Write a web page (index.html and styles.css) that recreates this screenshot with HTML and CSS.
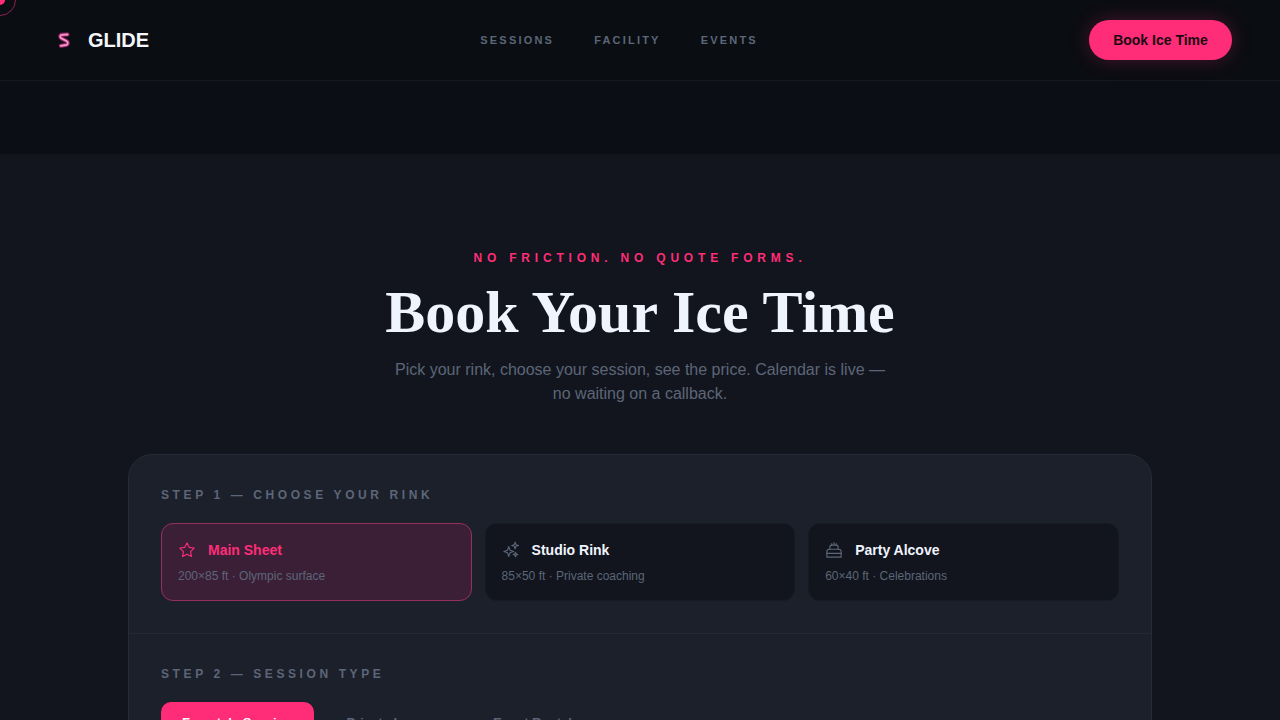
FILE: index.html
```html
<!DOCTYPE html>
<html lang="en">
<head>
    <meta charset="UTF-8">
    <meta name="viewport" content="width=device-width, initial-scale=1.0">
    <title>Glide - Book Your Ice Time</title>
    <link rel="stylesheet" href="styles.css">
</head>
<body>
    <div class="cursor-ring"><div class="cursor-dot"></div></div>

    <nav class="navbar">
        <a class="logo" href="#">
            <span class="logo-icon">
                <svg width="16" height="18" viewBox="0 0 16 18" fill="none" stroke-linecap="round" stroke-linejoin="round">
                    <path d="M11.500 3.500 6 3.800C3.800 4 3.600 6.400 5.500 7.400L10.500 10C12.400 11 12.200 13.600 10 14L4.800 14.800" stroke="#a02368" stroke-width="4"/>
                    <path d="M11.500 3.500 6 3.800C3.800 4 3.600 6.400 5.500 7.400L10.500 10C12.400 11 12.200 13.600 10 14L4.800 14.800" stroke="#f39ac6" stroke-width="1.800"/>
                </svg>
            </span>
            <span>GLIDE</span>
        </a>
        <div class="nav-links">
            <a href="#">SESSIONS</a>
            <a href="#">FACILITY</a>
            <a href="#">EVENTS</a>
        </div>
        <button class="nav-cta">Book Ice Time</button>
    </nav>

    <div class="nav-band"></div>

    <section class="booking">
        <p class="eyebrow">NO FRICTION. NO QUOTE FORMS.</p>
        <h1>Book Your Ice Time</h1>
        <p class="lead">Pick your rink, choose your session, see the price. Calendar is live — no waiting on a callback.</p>

        <div class="panel">
            <div class="step">
                <div class="step-label">STEP 1 — CHOOSE YOUR RINK</div>
                <div class="rink-grid">
                    <div class="rink-card active">
                        <div class="rink-title">
                            <svg class="rink-icon" viewBox="0 0 24 24" fill="none" stroke="currentColor" stroke-width="1.500" stroke-linecap="round" stroke-linejoin="round">
                                <path d="M12 2.500l2.940 5.960 6.580.96-4.760 4.640 1.120 6.550L12 17.520l-5.880 3.090 1.120-6.550-4.760-4.640 6.580-.96z"/>
                            </svg>
                            <span>Main Sheet</span>
                        </div>
                        <div class="rink-meta">200×85 ft · Olympic surface</div>
                    </div>
                    <div class="rink-card">
                        <div class="rink-title">
                            <svg class="rink-icon" viewBox="0 0 24 24" fill="none" stroke="currentColor" stroke-width="1.500" stroke-linecap="round" stroke-linejoin="round">
                                <path d="M9 7.500l1.700 4.800 4.800 1.700-4.800 1.700L9 20.500l-1.700-4.800L2.500 14l4.800-1.700z"/>
                                <path d="M17.500 1.500l1.100 3.400 3.400 1.100-3.400 1.100-1.100 3.400-1.100-3.400L13 6l3.400-1.100z"/>
                                <path d="M18 15l.8 2.200 2.200.8-2.200.8L18 21l-.8-2.200-2.200-.8 2.200-.8z"/>
                            </svg>
                            <span>Studio Rink</span>
                        </div>
                        <div class="rink-meta">85×50 ft · Private coaching</div>
                    </div>
                    <div class="rink-card">
                        <div class="rink-title">
                            <svg class="rink-icon" viewBox="0 0 24 24" fill="none" stroke="currentColor" stroke-width="1.500" stroke-linecap="round" stroke-linejoin="round">
                                <path d="M12 2v3M9 3.500v2M15 3.500v2"/>
                                <path d="M6.500 11V8.500C6.500 6.500 7.500 5.500 9 5.500h6c1.500 0 2.500 1 2.500 3V11"/>
                                <path d="M2.500 14c0-2 1.200-3 3-3h13c1.800 0 3 1 3 3v7.500h-19z"/>
                                <path d="M2.500 16.500h19"/>
                            </svg>
                            <span>Party Alcove</span>
                        </div>
                        <div class="rink-meta">60×40 ft · Celebrations</div>
                    </div>
                </div>
            </div>
            <div class="step">
                <div class="step-label">STEP 2 — SESSION TYPE</div>
                <div class="session-tabs">
                    <button class="session-tab active">Freestyle Session</button>
                    <button class="session-tab">Private Lesson</button>
                    <button class="session-tab">Event Rental</button>
                </div>
            </div>
        </div>
    </section>
</body>
</html>
```

FILE: styles.css
```css
* {
    box-sizing: border-box;
}

body {
    margin: 0;
    background-color: #0b0e14;
    color: #f0f4ff;
    font-family: "Liberation Sans", Arial, sans-serif;
    height: 720px;
    overflow: hidden;
}

.cursor-ring {
    position: absolute;
    left: -16px;
    top: -16px;
    width: 32px;
    height: 32px;
    border: 1px solid #8c2250;
    border-radius: 50%;
    display: flex;
    align-items: center;
    justify-content: center;
}

.cursor-dot {
    width: 10px;
    height: 10px;
    background-color: #ff2d78;
    border-radius: 50%;
}

.navbar {
    height: 81px;
    padding: 0 48px;
    display: flex;
    align-items: center;
    justify-content: space-between;
    background-color: #0a0d12;
    border-bottom: 1px solid #141821;
}

.logo {
    display: flex;
    align-items: center;
    gap: 8px;
    color: #f4f6fb;
    text-decoration: none;
    font-size: 20px;
    font-weight: 700;
}

.logo-icon {
    width: 32px;
    height: 32px;
    display: flex;
    align-items: center;
    justify-content: center;
}

.nav-links {
    display: flex;
    gap: 40px;
}

.nav-links a {
    color: #5c6678;
    text-decoration: none;
    font-size: 11px;
    font-weight: 700;
    letter-spacing: 2.2px;
}

.nav-cta {
    width: 143px;
    height: 40px;
    background-color: #ff2d78;
    color: #1a0a12;
    border: none;
    border-radius: 20px;
    font-family: inherit;
    font-size: 14px;
    font-weight: 700;
    box-shadow: 0 0 20px rgba(255, 45, 120, 0.25);
}

.nav-band {
    height: 73px;
    background-color: #0b0e15;
}

.booking {
    background-color: #12151d;
    padding-top: 97px;
    height: 566px;
}

.eyebrow {
    margin: 0;
    text-align: center;
    color: #ff2d78;
    font-size: 12px;
    line-height: 15px;
    font-weight: 700;
    letter-spacing: 4.8px;
}

h1 {
    margin: 12px 0 0;
    text-align: center;
    font-family: "Liberation Serif", "Times New Roman", serif;
    font-size: 60px;
    line-height: 68px;
    font-weight: 700;
    color: #f0f4ff;
}

.lead {
    width: 500px;
    margin: 12px auto 0;
    text-align: center;
    color: #5c6678;
    font-size: 16px;
    line-height: 24px;
}

.panel {
    width: 1024px;
    margin: 48px auto 0;
    background-color: #1c202b;
    border: 1px solid #262b37;
    border-radius: 24px;
}

.step {
    padding: 33px 32px 32px;
    border-bottom: 1px solid #232833;
}

.step-label {
    color: #5c6678;
    font-size: 12px;
    line-height: 15px;
    font-weight: 700;
    letter-spacing: 3.6px;
    margin-bottom: 20px;
}

.rink-grid {
    display: grid;
    grid-template-columns: repeat(3, 1fr);
    gap: 12.8px;
}

.rink-card {
    height: 78px;
    padding: 16px;
    background-color: #12151d;
    border: 1px solid #161a22;
    border-radius: 12px;
}

.rink-card.active {
    background-color: #3b1f37;
    border-color: #98305f;
}

.rink-title {
    display: flex;
    align-items: center;
    gap: 12px;
    font-size: 14px;
    line-height: 20px;
    font-weight: 700;
    color: #f0f4ff;
}

.rink-icon {
    width: 18px;
    height: 18px;
    color: #5c6678;
}

.rink-card.active .rink-title,
.rink-card.active .rink-icon {
    color: #ff2d78;
}

.rink-meta {
    margin-top: 9px;
    color: #5c6678;
    font-size: 12px;
    line-height: 14px;
}

.session-tabs {
    display: flex;
    gap: 12px;
}

.session-tab {
    height: 40px;
    padding: 0 21px;
    background: transparent;
    border: none;
    border-radius: 10px;
    color: #5c6678;
    font-family: inherit;
    font-size: 13px;
    font-weight: 700;
}

.session-tab.active {
    background-color: #ff2d78;
    color: #fff;
}
```
